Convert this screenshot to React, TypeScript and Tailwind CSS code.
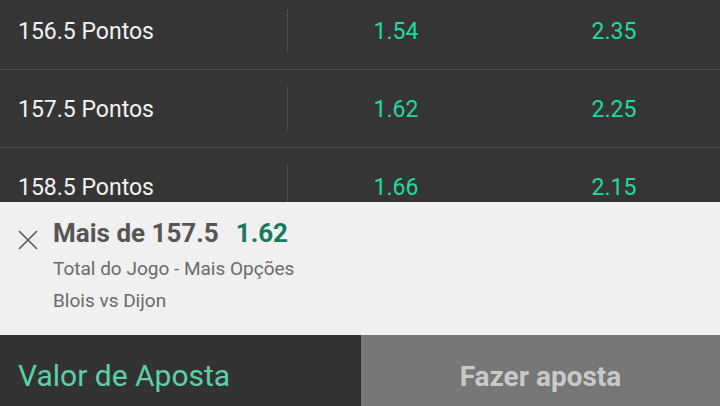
import React from 'react';

const rows = [
  { label: '156.5 Pontos', over: '1.54', under: '2.35' },
  { label: '157.5 Pontos', over: '1.62', under: '2.25' },
  { label: '158.5 Pontos', over: '1.66', under: '2.15' },
];

const CloseIcon = () => (
  <svg width="20" height="20" viewBox="0 0 20 20" className="text-[#5a5a5a]">
    <path d="M1 1 L19 19 M19 1 L1 19" stroke="currentColor" strokeWidth="1.6" fill="none" />
  </svg>
);

export default function App() {
  return (
    <div
      className="flex h-[406px] w-[720px] flex-col overflow-hidden bg-[#353535]"
      style={{ fontFamily: 'Roboto, "Noto Sans", sans-serif' }}
    >
      {/* market list, scrolled slightly */}
      <div className="flex-1 overflow-hidden">
        <div className="-mt-[8px]">
          {rows.map((r) => (
            <div key={r.label} className="flex h-[78px] items-center border-b border-[#4a4a4a]">
              <div className="flex h-full w-[287px] items-center pt-[3px]">
                <span className="pl-[18px] text-[23px] text-[#f2f2f2]">{r.label}</span>
              </div>
              <div className="h-[43px] w-px bg-[#4d4d4d]" />
              <div className="flex w-[216px] justify-center pt-[3px] text-[23px] text-[#24d9a0]">{r.over}</div>
              <div className="flex w-[216px] justify-center pl-[4px] pt-[3px] text-[23px] text-[#24d9a0]">{r.under}</div>
            </div>
          ))}
        </div>
      </div>

      {/* bet slip selection */}
      <div className="flex h-[133px] bg-[#f0f0f0]">
        <div className="pl-[18px] pt-[28px]">
          <CloseIcon />
        </div>
        <div className="pl-[15px] pt-[13px]">
          <div className="flex items-baseline gap-[17px] leading-[36px]">
            <span className="text-[26px] font-bold text-[#555555]">Mais de 157.5</span>
            <span className="text-[26px] font-bold text-[#167a5b]">1.62</span>
          </div>
          <div className="mt-[2px] text-[19px] leading-[32px] text-[#6a6a6a]">Total do Jogo - Mais Opções</div>
          <div className="text-[19px] leading-[32px] text-[#6a6a6a]">Blois vs Dijon</div>
        </div>
      </div>

      {/* bottom actions */}
      <div className="flex h-[71px]">
        <div className="flex w-[360px] items-center bg-[#333333] pl-[18px] pt-[10px]">
          <span className="text-[30px] text-[#5cd0a6]">Valor de Aposta</span>
        </div>
        <div className="w-px bg-[#2a2a2a]" />
        <div className="flex flex-1 items-center justify-center bg-[#777777] pt-[12px]">
          <span className="text-[28px] font-bold text-[#c9c9c9]">Fazer aposta</span>
        </div>
      </div>
    </div>
  );
}
